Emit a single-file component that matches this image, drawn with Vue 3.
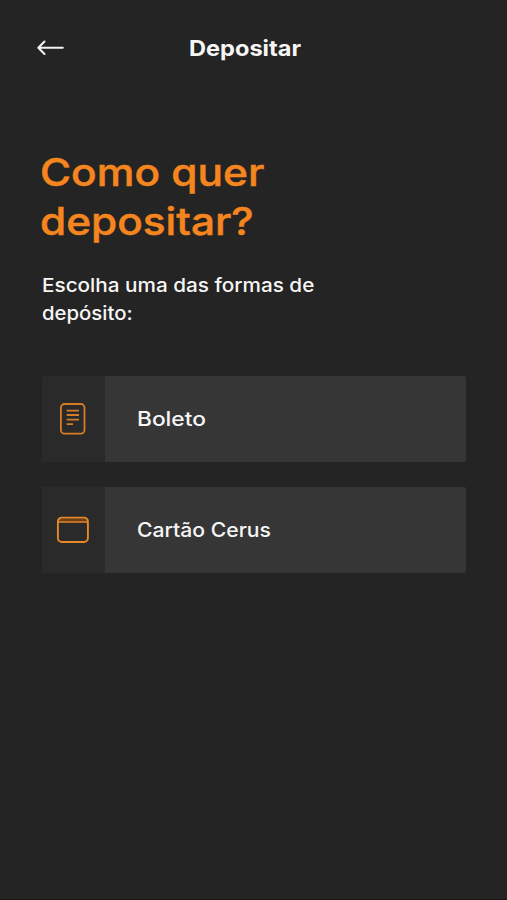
<script setup>
const options = [
  { id: 'boleto', label: 'Boleto' },
  { id: 'cartao', label: 'Cartão Cerus' },
]
</script>

<template>
  <main class="screen">
    <header class="topbar">
      <button class="back" aria-label="Voltar">
        <svg width="28" height="16" viewBox="0 0 28 16" fill="none" stroke="#f4f4f4" stroke-width="2" stroke-linecap="round" stroke-linejoin="round">
          <path d="M8.5 1.5 2.3 7.8 8.5 14M2.3 7.8H26.8" />
        </svg>
      </button>
      <h1 class="title">Depositar</h1>
    </header>

    <h2 class="question">
      <span class="line q1">Como quer</span>
      <span class="line q2">depositar?</span>
    </h2>
    <p class="hint">
      <span class="line h1">Escolha uma das formas de</span>
      <span class="line h2">depósito:</span>
    </p>

    <div class="options">
      <button v-for="option in options" :key="option.id" class="option">
        <span class="icon">
          <svg v-if="option.id === 'boleto'" width="28" height="34" viewBox="0 0 28 34" fill="none" stroke="#d67c26" stroke-width="1.8">
            <rect x="1.9" y="2" width="23.6" height="29.6" rx="3.6" />
            <path d="M7.7 8.7H20M7.7 13H20M7.7 17.7H20M7.7 22.2H14" />
          </svg>
          <svg v-else width="34" height="28" viewBox="0 0 34 28" fill="none" stroke="#e88826" stroke-width="1.9">
            <path d="M2 4H32" stroke="#713f16" stroke-width="2.5" />
            <rect x="1.9" y="1.6" width="30" height="24.4" rx="4" />
            <path d="M2 6H32" stroke-width="1.6" />
          </svg>
        </span>
        <span class="label" :class="option.id">{{ option.label }}</span>
      </button>
    </div>
  </main>
</template>

<style>
body {
  margin: 0;
  background: #242424;
}
</style>

<style scoped>
.screen {
  box-sizing: border-box;
  width: 507px;
  height: 900px;
  padding: 28px 41px 0 36px;
  border-bottom: 1px solid #1c1518;
  background: #242424;
  color: #f6f6f6;
  font-family: Inter, "Liberation Sans", sans-serif;
}
button {
  padding: 0;
  border: 0;
  background: none;
  color: inherit;
  font: inherit;
  text-align: left;
}
.topbar {
  display: flex;
  align-items: center;
  height: 40px;
}
.back {
  display: flex;
  width: 153px;
}
.title,
.line,
.label {
  transform-origin: left center;
  white-space: nowrap;
}
.title {
  margin: 0;
  font-size: 21.5px;
  font-weight: 700;
  line-height: 39px;
  transform: scaleX(1.097);
}
.line {
  display: block;
}
.question {
  margin: 80px 0 0 4px;
  color: #f5861f;
  font-size: 38.5px;
  font-weight: 500;
  line-height: 49px;
  -webkit-text-stroke: 0.5px #f5861f;
}
.q1 {
  transform: scaleX(1.102);
}
.q2 {
  transform: scaleX(1.1);
}
.hint {
  margin: 26px 0 0 6px;
  font-size: 19px;
  font-weight: 500;
  line-height: 27.5px;
}
.h1 {
  transform: scaleX(1.09);
}
.h2 {
  transform: scaleX(1.07);
}
.options {
  display: flex;
  flex-direction: column;
  gap: 25px;
  margin: 49px 0 0 6px;
}
.option {
  display: flex;
  height: 86px;
  border-radius: 2px;
  background: #363636;
  overflow: hidden;
}
.icon {
  display: flex;
  box-sizing: border-box;
  align-items: center;
  justify-content: center;
  width: 63px;
  padding-right: 1px;
  background: #2a2a2a;
}
.label {
  margin-left: 32px;
  font-size: 20px;
  font-weight: 500;
  line-height: 86px;
}
.boleto {
  transform: scaleX(1.135);
}
.cartao {
  transform: scaleX(1.057);
}
</style>
